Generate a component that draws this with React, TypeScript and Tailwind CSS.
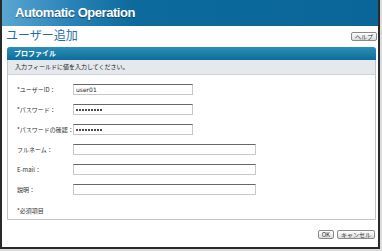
import React from "react";

const jp = "font-['Noto_Sans_CJK_JP','Liberation_Sans',sans-serif]";

function Dots() {
  return (
    <div className="flex gap-[1px]">
      {Array.from({ length: 9 }).map((_, i) => (
        <span key={i} className="w-[2px] h-[2px] bg-[#111] rounded-full" />
      ))}
    </div>
  );
}

function Field({ label, value, type = "text", long = false }: { label: string; value?: string; type?: string; long?: boolean }) {
  return (
    <div className="flex items-center h-[11px]">
      <div className={`w-[56px] whitespace-nowrap text-[6px] leading-none text-[#333] ${jp}`}>{label}</div>
      <div
        className={`${long ? "w-[183px]" : "w-[120px]"} h-[11px] border border-[#c8c8c8] border-t-[#666] bg-white flex items-center pl-[2px] text-[6px] leading-none text-[#222] font-['DejaVu_Sans',sans-serif]`}
      >
        {type === "password" ? <Dots /> : value}
      </div>
    </div>
  );
}

function Btn({ children }: { children: React.ReactNode }) {
  return (
    <div
      className={`h-[9px] px-[3px] flex items-center border border-[#8a8a8a] rounded-[2px] bg-gradient-to-b from-[#ffffff] to-[#dcdcdc] text-[6px] leading-none text-[#333] ${jp}`}
    >
      {children}
    </div>
  );
}

export default function App() {
  return (
    <div className="w-[382px] h-[251px] bg-[#dcdcdc]">
      <div className="w-[380px] h-[249px] border-x-2 border-b-2 border-[#2a2a2a] bg-white flex flex-col">
        <div className="h-[26px] flex items-center pl-[13px] bg-[linear-gradient(to_right,#5aa6d2_0%,#2a83b8_18%,#0d6a9c_35%,#0a6699_100%)]">
          <span className="text-white font-bold text-[13px] tracking-[-0.45px] font-['Liberation_Sans',sans-serif] [text-shadow:0_1px_1px_rgba(0,0,0,0.4)]">
            Automatic Operation
          </span>
        </div>
        <div className="h-[21px] flex items-start justify-between pl-[4px] pr-[1px]">
          <span className={`text-[12px] leading-none mt-[3px] text-[#1d6fa5] ${jp}`}>ユーザー追加</span>
          <div className="mt-[6px]">
            <Btn>ヘルプ</Btn>
          </div>
        </div>
        <div className="ml-[5px] mr-[2px] h-[173px] border border-[#c4c4c4] rounded-t-[3px] flex flex-col">
          <div className="h-[13px] -mx-px -mt-px rounded-t-[3px] bg-gradient-to-b from-[#2a8fba] to-[#0c6d98] flex items-center pl-[7px]">
            <span className={`text-white font-bold text-[7px] leading-none ${jp}`}>プロファイル</span>
          </div>
          <div className="h-[15px] bg-[#e5e8ec] border-b border-[#cfd2d6] flex items-center pl-[7px]">
            <span className={`text-[6px] leading-none text-[#222] ${jp}`}>入力フィールドに値を入力してください。</span>
          </div>
          <div className="flex flex-col gap-[9px] pl-[9px] pt-[9px]">
            <Field label="*ユーザーID：" value="user01" />
            <Field label="*パスワード：" type="password" />
            <Field label="*パスワードの確認：" type="password" />
            <Field label="フルネーム：" long />
            <Field label="E-mail：" long />
            <Field label="説明：" long />
          </div>
          <div className={`pl-[9px] mt-[13px] text-[6px] leading-none text-[#333] ${jp}`}>*必須項目</div>
        </div>
        <div className="flex justify-end gap-[3px] mt-[10px] pr-[3px]">
          <Btn>OK</Btn>
          <Btn>キャンセル</Btn>
        </div>
      </div>
    </div>
  );
}
